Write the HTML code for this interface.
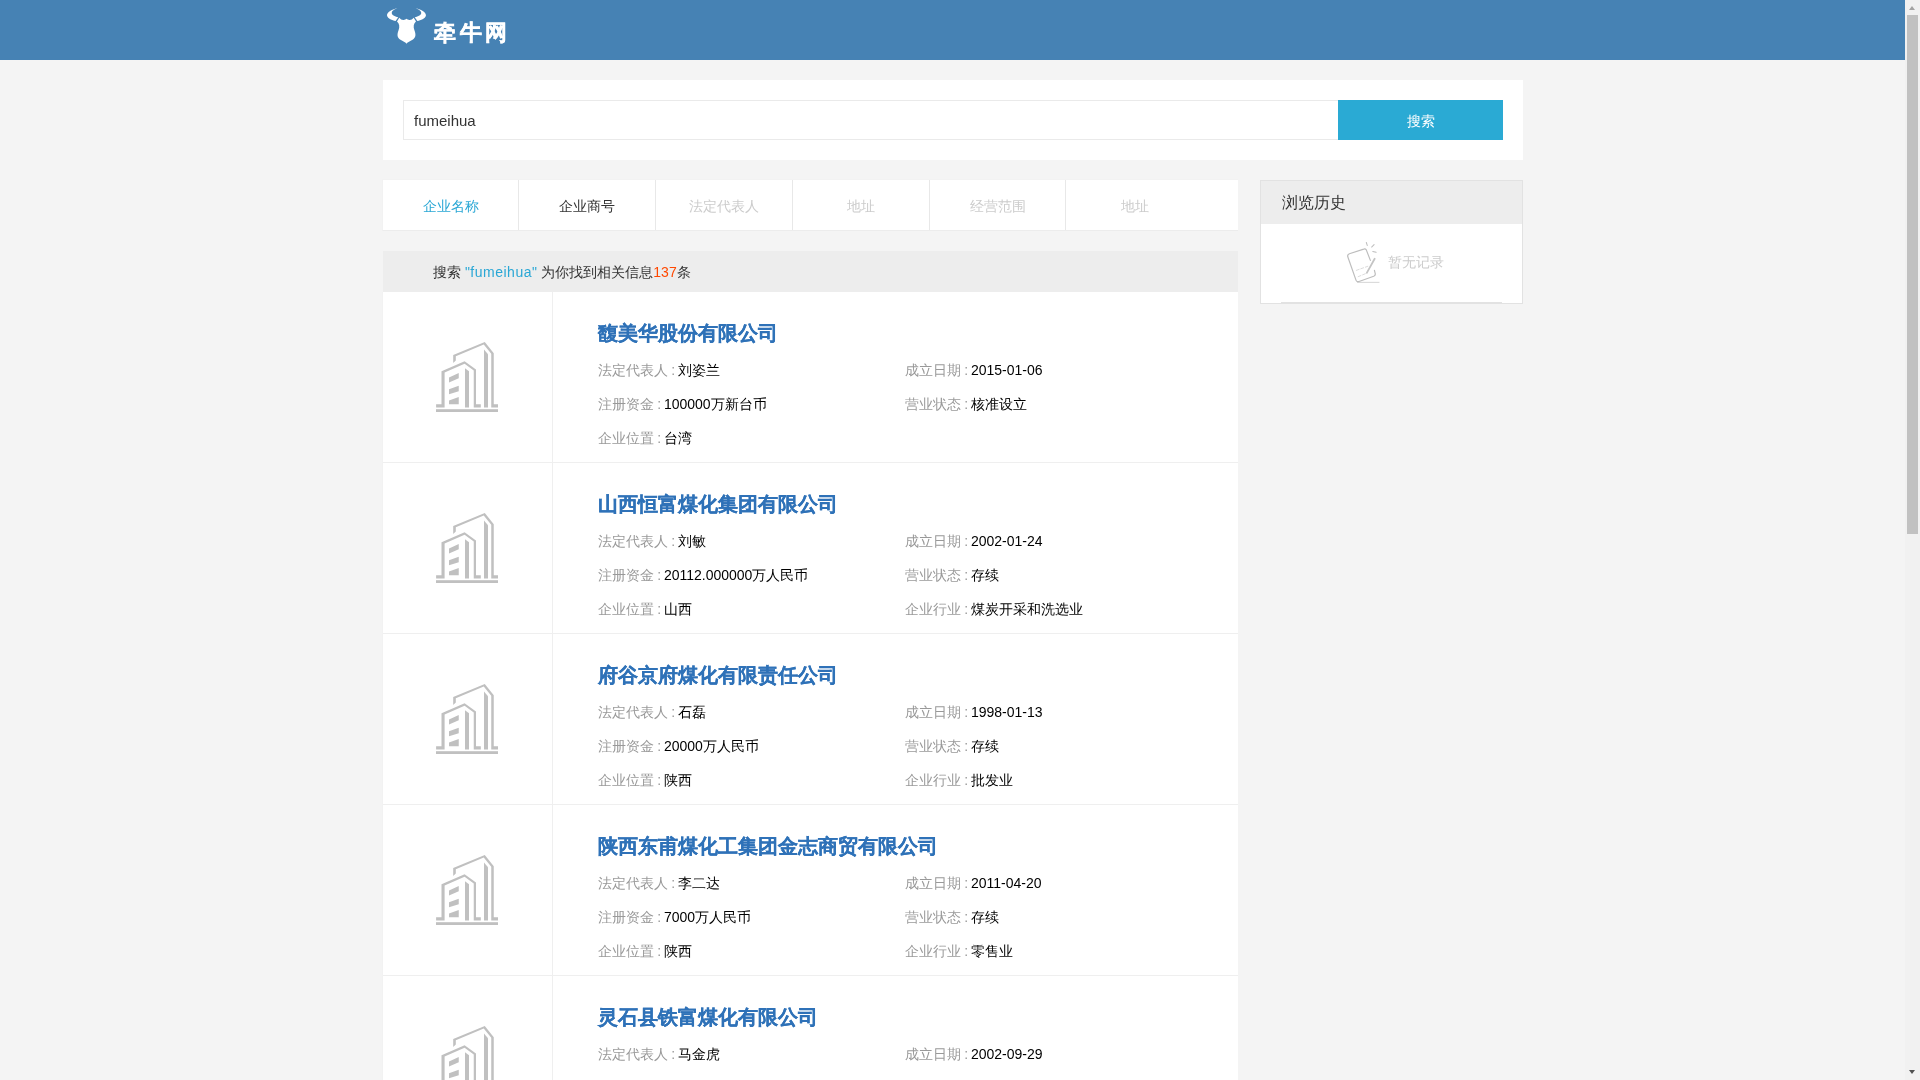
<!DOCTYPE html>
<html><head><meta charset="utf-8">
<style>
*{margin:0;padding:0;box-sizing:border-box}
html,body{width:1920px;height:1080px;overflow:hidden}
.wrap{position:absolute;left:0;top:0;width:1920px;height:1080px;will-change:transform}
body{background:#f4f4f4;font-family:"Liberation Sans",sans-serif;position:relative;color:#333}
.hdr{position:absolute;left:0;top:0;width:1905px;height:60px;background:#4682b4}
.logo{position:absolute;left:384px;top:4px;width:46px;height:44px}
.logotxt{position:absolute;left:434px;top:17px;font-size:22px;font-weight:bold;color:#fff;letter-spacing:3.7px;line-height:32px;white-space:nowrap;-webkit-text-stroke:0.4px #fff}
.sb{position:absolute;left:1905px;top:0;width:15px;height:1080px;background:#f1f1f1}
.sb .thumb{position:absolute;left:2px;top:15px;width:11px;height:519px;background:#c1c1c1}
.sb .up{position:absolute;left:4px;top:6px;width:0;height:0;border-left:3.5px solid transparent;border-right:3.5px solid transparent;border-bottom:4px solid #a3a3a3}
.sb .dn{position:absolute;left:4px;top:1070px;width:0;height:0;border-left:3.5px solid transparent;border-right:3.5px solid transparent;border-top:4px solid #505050}
.search{position:absolute;left:383px;top:80px;width:1140px;height:80px;background:#fff}
.search .inp{position:absolute;left:20px;top:20px;width:936px;height:40px;border:1px solid #eaeaea;border-right:none;font-size:15px;color:#333;line-height:40px;padding-left:10px}
.search .btn{position:absolute;left:955px;top:20px;width:165px;height:40px;background:#2aaad4;color:#fff;font-size:14px;line-height:42px;text-align:center}
.tabs{position:absolute;left:382px;top:179px;width:856px;height:52px;background:#fff;border-top:1px solid #f2f2f2;border-left:1px solid #f2f2f2;border-bottom:1px solid #ececec}
.tab{position:absolute;top:1px;height:50px;line-height:50px;text-align:center;font-size:14px;color:#ccc}
.tsep{position:absolute;top:0;width:1px;height:50px;background:#e8e8e8}
.rbar{position:absolute;left:383px;top:251px;width:855px;height:41px;background:#ededed;font-size:14px;line-height:42px;padding-left:50px;color:#333}
.rbar .q{color:#2aa7d5;letter-spacing:0.5px}
.rbar .n{color:#ff4800}
.list{position:absolute;left:382px;top:292px;width:856px;height:800px;background:#fff;border-left:1px solid #f2f2f2}
.item{position:absolute;left:0;width:855px;height:171px;border-bottom:1px solid #efefef}
.item .ic{position:absolute;left:0;top:0;width:170px;height:170px;border-right:1px solid #efefef}
.item .ic svg{position:absolute;left:37px;top:38px}
.item h3{position:absolute;left:215px;top:26px;font-size:20px;font-weight:bold;color:#2f72b8;line-height:30px;white-space:nowrap;-webkit-text-stroke:0.2px #2f72b8}
.row{position:absolute;font-size:14px;line-height:20px;white-space:nowrap;color:#000}
.row span{color:#999}
.row i{font-style:normal;letter-spacing:-0.6px}
.side{position:absolute;left:1260px;top:180px;width:263px;height:124px;background:#fff;border:1px solid #e2e2e2}
.side .sh{position:absolute;left:0;top:0;width:261px;height:43px;background:#ededed;font-size:16px;line-height:43px;padding-left:21px;color:#333}
.side .empty{position:absolute;left:20px;top:43px;width:221px;height:79px;border-bottom:1px solid #e2e2e2}
.side .et{position:absolute;left:107px;top:28px;font-size:14px;color:#ccc;line-height:20px;white-space:nowrap}
.side .note{position:absolute;left:49px;top:6px}
</style></head><body><div class="wrap">
<div class="hdr">
  <svg class="logo" viewBox="0 0 1129 1080" width="46" height="44">
    <path fill="#fff" d="M350 100 C200 130 60 200 75 290 C95 360 200 400 285 420 L350 325 C260 305 185 270 190 215 C195 160 280 120 350 100 Z"/>
    <path fill="#fff" d="M754 100 C904 130 1044 200 1029 290 C1009 360 904 400 819 420 L754 325 C844 305 919 270 914 215 C909 160 824 120 754 100 Z"/>
    <path fill="#fff" d="M375 340 Q420 400 480 395 Q530 390 552 365 Q574 390 624 395 Q684 400 729 340 L785 430 C725 480 715 560 745 640 C790 760 780 830 700 880 C620 930 570 950 552 975 C534 950 484 930 404 880 C324 830 314 760 359 640 C389 560 379 480 319 430 Z"/>
  </svg>
  <div class="logotxt">牵牛网</div>
</div>

<div class="search">
  <div class="inp">fumeihua</div>
  <div class="btn">搜索</div>
</div>

<div class="tabs">
  <div class="tab" style="left:0;width:135px;color:#2aa7d5">企业名称</div>
  <div class="tsep" style="left:135px"></div>
  <div class="tab" style="left:136px;width:136px;color:#333">企业商号</div>
  <div class="tsep" style="left:272px"></div>
  <div class="tab" style="left:273px;width:136px">法定代表人</div>
  <div class="tsep" style="left:409px"></div>
  <div class="tab" style="left:410px;width:136px">地址</div>
  <div class="tsep" style="left:546px"></div>
  <div class="tab" style="left:547px;width:135px">经营范围</div>
  <div class="tsep" style="left:682px"></div>
  <div class="tab" style="left:683px;width:138px">地址</div>
</div>

<div class="rbar">搜索 <span class="q">"fumeihua"</span> 为你找到相关信息<span class="n">137</span>条</div>

<div class="list">
<div class="item" style="top:0px"><div class="ic"><svg width="100" height="90" viewBox="0 0 100 90"><g fill="#c0c0c0"><rect x="16" y="79.2" width="62" height="2.8"/><path d="M16.1 77.5V74.2H21.5V41.25L44.6 31.25L56 39.6V74.2H60.8V77.5H53.75V40.4L44.6 33.75L24.6 42.5V77.5Z"/><path d="M29 47.5L38.75 42.9V48.3L29 52.5Z"/><path d="M29 59.2L38.75 55.8V61.25L29 64.2Z"/><path d="M29 70.4L38.75 67.1V74.2H29Z"/><path d="M45 38.3L49 41.25V77.5H45Z"/><path d="M33.2 32.9V25L64.8 12.1L73.75 23.3V74.2H78V77.5H71.25V23.75L63.75 14.6L35.8 26.25V30.4Z"/><path d="M64 19.6L68 24.2V77.5H64Z"/></g></svg></div><h3>馥美华股份有限公司</h3>
<div class="row" style="left:215px;top:68px"><span>法定代表人<i> : </i></span>刘姿兰</div>
<div class="row" style="left:215px;top:102px"><span>注册资金<i> : </i></span>100000万新台币</div>
<div class="row" style="left:215px;top:136px"><span>企业位置<i> : </i></span>台湾</div>
<div class="row" style="left:522px;top:68px"><span>成立日期<i> : </i></span>2015-01-06</div>
<div class="row" style="left:522px;top:102px"><span>营业状态<i> : </i></span>核准设立</div></div>
<div class="item" style="top:171px"><div class="ic"><svg width="100" height="90" viewBox="0 0 100 90"><g fill="#c0c0c0"><rect x="16" y="79.2" width="62" height="2.8"/><path d="M16.1 77.5V74.2H21.5V41.25L44.6 31.25L56 39.6V74.2H60.8V77.5H53.75V40.4L44.6 33.75L24.6 42.5V77.5Z"/><path d="M29 47.5L38.75 42.9V48.3L29 52.5Z"/><path d="M29 59.2L38.75 55.8V61.25L29 64.2Z"/><path d="M29 70.4L38.75 67.1V74.2H29Z"/><path d="M45 38.3L49 41.25V77.5H45Z"/><path d="M33.2 32.9V25L64.8 12.1L73.75 23.3V74.2H78V77.5H71.25V23.75L63.75 14.6L35.8 26.25V30.4Z"/><path d="M64 19.6L68 24.2V77.5H64Z"/></g></svg></div><h3>山西恒富煤化集团有限公司</h3>
<div class="row" style="left:215px;top:68px"><span>法定代表人<i> : </i></span>刘敏</div>
<div class="row" style="left:215px;top:102px"><span>注册资金<i> : </i></span>20112.000000万人民币</div>
<div class="row" style="left:215px;top:136px"><span>企业位置<i> : </i></span>山西</div>
<div class="row" style="left:522px;top:68px"><span>成立日期<i> : </i></span>2002-01-24</div>
<div class="row" style="left:522px;top:102px"><span>营业状态<i> : </i></span>存续</div>
<div class="row" style="left:522px;top:136px"><span>企业行业<i> : </i></span>煤炭开采和洗选业</div></div>
<div class="item" style="top:342px"><div class="ic"><svg width="100" height="90" viewBox="0 0 100 90"><g fill="#c0c0c0"><rect x="16" y="79.2" width="62" height="2.8"/><path d="M16.1 77.5V74.2H21.5V41.25L44.6 31.25L56 39.6V74.2H60.8V77.5H53.75V40.4L44.6 33.75L24.6 42.5V77.5Z"/><path d="M29 47.5L38.75 42.9V48.3L29 52.5Z"/><path d="M29 59.2L38.75 55.8V61.25L29 64.2Z"/><path d="M29 70.4L38.75 67.1V74.2H29Z"/><path d="M45 38.3L49 41.25V77.5H45Z"/><path d="M33.2 32.9V25L64.8 12.1L73.75 23.3V74.2H78V77.5H71.25V23.75L63.75 14.6L35.8 26.25V30.4Z"/><path d="M64 19.6L68 24.2V77.5H64Z"/></g></svg></div><h3>府谷京府煤化有限责任公司</h3>
<div class="row" style="left:215px;top:68px"><span>法定代表人<i> : </i></span>石磊</div>
<div class="row" style="left:215px;top:102px"><span>注册资金<i> : </i></span>20000万人民币</div>
<div class="row" style="left:215px;top:136px"><span>企业位置<i> : </i></span>陕西</div>
<div class="row" style="left:522px;top:68px"><span>成立日期<i> : </i></span>1998-01-13</div>
<div class="row" style="left:522px;top:102px"><span>营业状态<i> : </i></span>存续</div>
<div class="row" style="left:522px;top:136px"><span>企业行业<i> : </i></span>批发业</div></div>
<div class="item" style="top:513px"><div class="ic"><svg width="100" height="90" viewBox="0 0 100 90"><g fill="#c0c0c0"><rect x="16" y="79.2" width="62" height="2.8"/><path d="M16.1 77.5V74.2H21.5V41.25L44.6 31.25L56 39.6V74.2H60.8V77.5H53.75V40.4L44.6 33.75L24.6 42.5V77.5Z"/><path d="M29 47.5L38.75 42.9V48.3L29 52.5Z"/><path d="M29 59.2L38.75 55.8V61.25L29 64.2Z"/><path d="M29 70.4L38.75 67.1V74.2H29Z"/><path d="M45 38.3L49 41.25V77.5H45Z"/><path d="M33.2 32.9V25L64.8 12.1L73.75 23.3V74.2H78V77.5H71.25V23.75L63.75 14.6L35.8 26.25V30.4Z"/><path d="M64 19.6L68 24.2V77.5H64Z"/></g></svg></div><h3>陕西东甫煤化工集团金志商贸有限公司</h3>
<div class="row" style="left:215px;top:68px"><span>法定代表人<i> : </i></span>李二达</div>
<div class="row" style="left:215px;top:102px"><span>注册资金<i> : </i></span>7000万人民币</div>
<div class="row" style="left:215px;top:136px"><span>企业位置<i> : </i></span>陕西</div>
<div class="row" style="left:522px;top:68px"><span>成立日期<i> : </i></span>2011-04-20</div>
<div class="row" style="left:522px;top:102px"><span>营业状态<i> : </i></span>存续</div>
<div class="row" style="left:522px;top:136px"><span>企业行业<i> : </i></span>零售业</div></div>
<div class="item" style="top:684px"><div class="ic"><svg width="100" height="90" viewBox="0 0 100 90"><g fill="#c0c0c0"><rect x="16" y="79.2" width="62" height="2.8"/><path d="M16.1 77.5V74.2H21.5V41.25L44.6 31.25L56 39.6V74.2H60.8V77.5H53.75V40.4L44.6 33.75L24.6 42.5V77.5Z"/><path d="M29 47.5L38.75 42.9V48.3L29 52.5Z"/><path d="M29 59.2L38.75 55.8V61.25L29 64.2Z"/><path d="M29 70.4L38.75 67.1V74.2H29Z"/><path d="M45 38.3L49 41.25V77.5H45Z"/><path d="M33.2 32.9V25L64.8 12.1L73.75 23.3V74.2H78V77.5H71.25V23.75L63.75 14.6L35.8 26.25V30.4Z"/><path d="M64 19.6L68 24.2V77.5H64Z"/></g></svg></div><h3>灵石县铁富煤化有限公司</h3>
<div class="row" style="left:215px;top:68px"><span>法定代表人<i> : </i></span>马金虎</div>
<div class="row" style="left:215px;top:102px"><span>注册资金<i> : </i></span>5000万人民币</div>
<div class="row" style="left:215px;top:136px"><span>企业位置<i> : </i></span>山西</div>
<div class="row" style="left:522px;top:68px"><span>成立日期<i> : </i></span>2002-09-29</div>
<div class="row" style="left:522px;top:102px"><span>营业状态<i> : </i></span>存续</div>
<div class="row" style="left:522px;top:136px"><span>企业行业<i> : </i></span>煤炭开采和洗选业</div></div>
</div>

<div class="side">
  <div class="sh">浏览历史</div>
  <div class="empty">
    <svg class="note" width="130" height="80" viewBox="0 0 1755 1080"><g fill="none" stroke-linecap="round" stroke-linejoin="round">
<path stroke="#bdbdbd" stroke-width="16" d="M545 410 L490 268 Q478 250 455 258 L262 320 Q232 332 240 362 L352 680 Q362 705 392 695 L590 625 Q618 612 610 585 L600 545"/>
<path stroke="#c4c4c4" stroke-width="24" d="M603 388 L497 578"/>
<path stroke="#cfcfcf" stroke-width="10" stroke-dasharray="40 25" d="M355 545 L510 490 M380 630 L490 585"/>
<path stroke="#bdbdbd" stroke-width="14" d="M490 168 L503 208 M562 230 L595 198 M578 290 L622 302"/>
<path stroke="#c8c8c8" stroke-width="10" d="M370 707 L662 707"/>
</g></svg>
    <div class="et">暂无记录</div>
  </div>
</div>

<div class="sb"><div class="up"></div><div class="thumb"></div><div class="dn"></div></div>
</div></body></html>
